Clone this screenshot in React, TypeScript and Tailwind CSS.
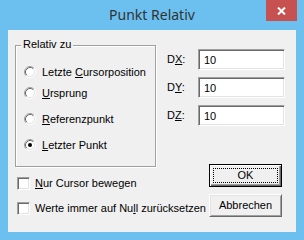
import React from 'react';

const Radio = ({ checked }: { checked?: boolean }) => (
  <svg width="12" height="12" viewBox="0 0 12 12" className="shrink-0">
    <circle cx="6" cy="6" r="4.5" fill="#fff" />
    <path d="M2.11 9.89 A5.5 5.5 0 0 1 9.89 2.11" fill="none" stroke="#a0a0a0" strokeWidth="1" />
    <path d="M9.89 2.11 A5.5 5.5 0 0 1 2.11 9.89" fill="none" stroke="#fff" strokeWidth="1" />
    <path d="M2.82 9.18 A4.5 4.5 0 0 1 9.18 2.82" fill="none" stroke="#696969" strokeWidth="1" />
    <path d="M9.18 2.82 A4.5 4.5 0 0 1 2.82 9.18" fill="none" stroke="#e3e3e3" strokeWidth="1" />
    {checked && <circle cx="6" cy="6" r="2" fill="#000" />}
  </svg>
);

const RadioRow = ({ children, checked, className }: { children: React.ReactNode; checked?: boolean; className: string }) => (
  <div className={`flex items-center gap-[6px] h-[12px] ${className}`}>
    <Radio checked={checked} />
    <span className="leading-[13px] whitespace-nowrap">{children}</span>
  </div>
);

const Checkbox = ({ children }: { children: React.ReactNode }) => (
  <div className="flex items-center gap-[5px] h-[13px] ml-[2px]">
    <span className="w-[13px] h-[13px] shrink-0 bg-white border border-t-[#a0a0a0] border-l-[#a0a0a0] border-r-white border-b-white shadow-[inset_1px_1px_0_#696969,inset_-1px_-1px_0_#e3e3e3]" />
    <span className="leading-[13px] whitespace-nowrap">{children}</span>
  </div>
);

const Field = ({ label, hot }: { label: string; hot: string }) => (
  <div className="flex items-center">
    <span className="w-[31px] leading-[13px]">
      {label}
      <u>{hot}</u>:
    </span>
    <input
      readOnly
      value="10"
      className="w-[87px] h-[21px] pl-[5px] bg-white text-black text-[11px] outline-none border border-t-[#a0a0a0] border-l-[#a0a0a0] border-r-white border-b-white shadow-[inset_1px_1px_0_#696969,inset_-1px_-1px_0_#e3e3e3] font-['Liberation_Sans',Arial,sans-serif]"
    />
  </div>
);

export default function App() {
  return (
    <div className="w-[304px] h-[240px] bg-[#6cc0ef] flex flex-col font-['Liberation_Sans',Arial,sans-serif] text-[11px] text-black">
      <div className="relative h-[30px] flex items-center justify-center">
        <span className="font-['Noto_Sans',sans-serif] text-[14px] leading-[20px] text-[#333] -mt-[1px]">Punkt Relativ</span>
        <div className="absolute top-0 right-[7px] w-[31px] h-[21px] bg-[#c75050] flex items-center justify-center">
          <svg width="9" height="8" viewBox="0 0 9 8">
            <path d="M1 0.5 L8 7.5 M8 0.5 L1 7.5" stroke="#fff" strokeWidth="2" />
          </svg>
        </div>
      </div>

      <div className="flex-1 mx-[8px] mb-[8px] bg-[#f0f0f0] flex">
        <div className="w-[159px] shrink-0 pl-[7px] pt-[15px] flex flex-col">
          <div className="relative w-[141px] h-[122px] border border-[#a0a0a0] shadow-[inset_1px_1px_0_#fff,1px_1px_0_#fff] pl-[8px] flex flex-col">
            <span className="absolute left-[5px] -top-[8px] px-[2px] bg-[#f0f0f0] leading-[13px]">Relativ zu</span>
            <RadioRow className="mt-[20px]">
              Letzte <u>C</u>ursorposition
            </RadioRow>
            <RadioRow className="mt-[9px]">
              <u>U</u>rsprung
            </RadioRow>
            <RadioRow className="mt-[14px]">
              <u>R</u>eferenzpunkt
            </RadioRow>
            <RadioRow className="mt-[14px]" checked>
              <u>L</u>etzter Punkt
            </RadioRow>
          </div>
          <div className="mt-[10px] flex flex-col gap-[12px]">
            <Checkbox>
              <u>N</u>ur Cursor bewegen
            </Checkbox>
            <Checkbox>
              Werte immer auf Nu<u>l</u>l zurücksetzen
            </Checkbox>
          </div>
        </div>

        <div className="flex flex-col pt-[19px]">
          <div className="flex flex-col gap-[7px]">
            <Field label="D" hot="X" />
            <Field label="D" hot="Y" />
            <Field label="D" hot="Z" />
          </div>
          <div className="ml-[42px] mt-[38px] flex flex-col gap-[7px]">
            <button className="relative w-[73px] h-[23px] bg-[#f0f0f0] border border-black shadow-[inset_1px_1px_0_#fff,inset_-1px_-1px_0_#696969,inset_-2px_-2px_0_#a0a0a0] leading-[13px]">
              <span className="absolute inset-[3px] border border-dotted border-black" />
              OK
            </button>
            <button className="w-[73px] h-[23px] bg-[#f0f0f0] border border-t-white border-l-white border-r-[#696969] border-b-[#696969] shadow-[inset_1px_1px_0_#e3e3e3,inset_-1px_-1px_0_#a0a0a0] leading-[13px]">
              Abbrechen
            </button>
          </div>
        </div>
      </div>
    </div>
  );
}
